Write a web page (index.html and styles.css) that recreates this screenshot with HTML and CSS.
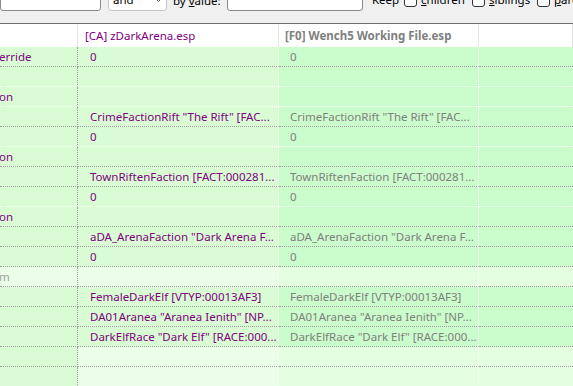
FILE: index.html
```html
<!DOCTYPE html>
<html lang="en">
<head>
  <meta charset="UTF-8" />
  <title>View - zDarkArena.esp</title>
  <link rel="stylesheet" href="styles.css">
</head>
<body>
  <div class="toolbar">
    <div class="tools">
      <span class="edit edit-name"></span>
      <span class="combo">and
        <svg class="chevron" width="7" height="4" viewBox="0 0 7 4"><path d="M0.5 0.5 L3.5 3.5 L6.5 0.5" fill="none" stroke="#555" stroke-width="1"/></svg>
      </span>
      <label class="lbl">by <u>v</u>alue:</label>
      <span class="edit edit-value"></span>
      <span class="keep">Keep</span>
      <label class="check check-children"><span class="box"></span><span><u>c</u>hildren</span></label>
      <label class="check check-siblings"><span class="box"></span><span><u>s</u>iblings</span></label>
      <label class="check"><span class="box"></span><span><u>p</u>arents</span></label>
    </div>
  </div>

  <div class="grid">
    <div class="row head">
      <div class="cell c0"></div>
      <div class="cell c1 mod">[CA] zDarkArena.esp</div>
      <div class="cell c2 base">[F0] Wench5 Working File.esp</div>
      <div class="cell c3"></div>
    </div>

    <div class="row">
      <div class="cell c0 mod">erride</div>
      <div class="cell c1 mod">0</div>
      <div class="cell c2 base">0</div>
      <div class="cell c3"></div>
    </div>
    <div class="row white-line">
      <div class="cell c0"></div><div class="cell c1"></div><div class="cell c2"></div><div class="cell c3"></div>
    </div>
    <div class="row white-line">
      <div class="cell c0 mod">on</div><div class="cell c1"></div><div class="cell c2"></div><div class="cell c3"></div>
    </div>
    <div class="row">
      <div class="cell c0"></div>
      <div class="cell c1 mod">CrimeFactionRift "The Rift" [FAC...</div>
      <div class="cell c2 base">CrimeFactionRift "The Rift" [FAC...</div>
      <div class="cell c3"></div>
    </div>
    <div class="row white-line">
      <div class="cell c0"></div>
      <div class="cell c1 mod">0</div>
      <div class="cell c2 base">0</div>
      <div class="cell c3"></div>
    </div>
    <div class="row">
      <div class="cell c0 mod">on</div><div class="cell c1"></div><div class="cell c2"></div><div class="cell c3"></div>
    </div>
    <div class="row">
      <div class="cell c0"></div>
      <div class="cell c1 mod">TownRiftenFaction [FACT:000281...</div>
      <div class="cell c2 base">TownRiftenFaction [FACT:000281...</div>
      <div class="cell c3"></div>
    </div>
    <div class="row white-line">
      <div class="cell c0"></div>
      <div class="cell c1 mod">0</div>
      <div class="cell c2 base">0</div>
      <div class="cell c3"></div>
    </div>
    <div class="row">
      <div class="cell c0 mod">on</div><div class="cell c1"></div><div class="cell c2"></div><div class="cell c3"></div>
    </div>
    <div class="row">
      <div class="cell c0"></div>
      <div class="cell c1 mod">aDA_ArenaFaction "Dark Arena F...</div>
      <div class="cell c2 base">aDA_ArenaFaction "Dark Arena F...</div>
      <div class="cell c3"></div>
    </div>
    <div class="row">
      <div class="cell c0"></div>
      <div class="cell c1 mod">0</div>
      <div class="cell c2 base">0</div>
      <div class="cell c3"></div>
    </div>
    <div class="row dim">
      <div class="cell c0 faded">m</div><div class="cell c1"></div><div class="cell c2"></div><div class="cell c3"></div>
    </div>
    <div class="row">
      <div class="cell c0"></div>
      <div class="cell c1 mod">FemaleDarkElf [VTYP:00013AF3]</div>
      <div class="cell c2 base">FemaleDarkElf [VTYP:00013AF3]</div>
      <div class="cell c3"></div>
    </div>
    <div class="row">
      <div class="cell c0"></div>
      <div class="cell c1 mod">DA01Aranea "Aranea Ienith" [NP...</div>
      <div class="cell c2 base">DA01Aranea "Aranea Ienith" [NP...</div>
      <div class="cell c3"></div>
    </div>
    <div class="row">
      <div class="cell c0"></div>
      <div class="cell c1 mod">DarkElfRace "Dark Elf" [RACE:000...</div>
      <div class="cell c2 base">DarkElfRace "Dark Elf" [RACE:000...</div>
      <div class="cell c3"></div>
    </div>
    <div class="row empty">
      <div class="cell c0"></div><div class="cell c1"></div><div class="cell c2"></div><div class="cell c3"></div>
    </div>
    <div class="row empty">
      <div class="cell c0"></div><div class="cell c1"></div><div class="cell c2"></div><div class="cell c3"></div>
    </div>
  </div>
</body>
</html>
```

FILE: styles.css
```css
body {
  margin: 0;
  padding: 0;
  overflow: hidden;
  font-family: "Noto Sans", "Open Sans", sans-serif;
  font-size: 11.5px;
  background: #f0f0f0;
  color: black;
}

/* filter bar, only its lower edge is in view */
.toolbar {
  height: 23px;
  overflow: hidden;
  background: #f0f0f0;
  border-bottom: 1px solid #6f6f6f;
}

.tools {
  display: flex;
  align-items: flex-start;
  margin-top: -12px;
}

.tools > * {
  flex-shrink: 0;
}

.edit, .combo {
  box-sizing: border-box;
  height: 23px;
  background: white;
  border: 1px solid #8a8a8a;
  border-radius: 3px;
}

.edit-name {
  width: 101px;
}

.combo {
  display: flex;
  align-items: center;
  justify-content: space-between;
  width: 59px;
  margin-left: 7px;
  padding: 0 4px 0 4px;
  line-height: 21px;
  border-color: #c6c6c6;
}

.chevron {
  margin-top: 1px;
}

.lbl {
  width: 54px;
  margin-left: 6px;
  padding-top: 2px;
  line-height: 22px;
  white-space: nowrap;
}

.edit-value {
  width: 136px;
}

.keep {
  width: 32px;
  margin-left: 9px;
  line-height: 22px;
  padding-top: 1px;
}

.check {
  display: flex;
  align-items: flex-start;
  gap: 4px;
  line-height: 22px;
  padding-top: 1px;
  white-space: nowrap;
}

.check-children { width: 68px; }
.check-siblings { width: 65px; }

.box {
  box-sizing: border-box;
  width: 13px;
  height: 13px;
  margin-top: 5px;
  background: white;
  border: 1px solid #333;
  border-radius: 3px;
}

/* record compare tree */
.grid {
  display: flex;
  flex-direction: column;
}

.row {
  display: grid;
  grid-template-columns: 78px 201px 200px 1fr;
}

.cell {
  box-sizing: border-box;
  height: 20px;
  line-height: 19px;
  white-space: nowrap;
  overflow: hidden;
  text-overflow: ellipsis;
  border-bottom: 1px dotted #a39ba3;
}

.c0 {
  background: #d9fcd5;
  border-right: 1px dotted #a39ba3;
  text-indent: -1px;
}

.c1 {
  background: #d9fcd5;
  border-right: 1px dotted white;
  padding-left: 12px;
}

.c2 {
  background: #cbfccb;
  border-right: 1px dotted white;
  padding-left: 11px;
}

.c3 {
  background: #cbfccb;
}

.white-line .cell {
  border-bottom-color: white;
}

.dim .c0, .dim .c1, .empty .c1 {
  background: #ebfee7;
}

.dim .c2, .dim .c3, .empty .c2, .empty .c3 {
  background: #e3fee0;
}

.head .cell {
  height: 23px;
  line-height: 23px;
  background: white;
  border-bottom: none;
  border-right: 1px solid #e5e5e5;
}

.head .c1 {
  padding-left: 7px;
}

.head .c2 {
  padding-left: 6px;
  font-weight: bold;
}

.mod {
  color: #800080;
}

.base {
  color: #808080;
}

.faded {
  color: #a0a0a0;
}
```
